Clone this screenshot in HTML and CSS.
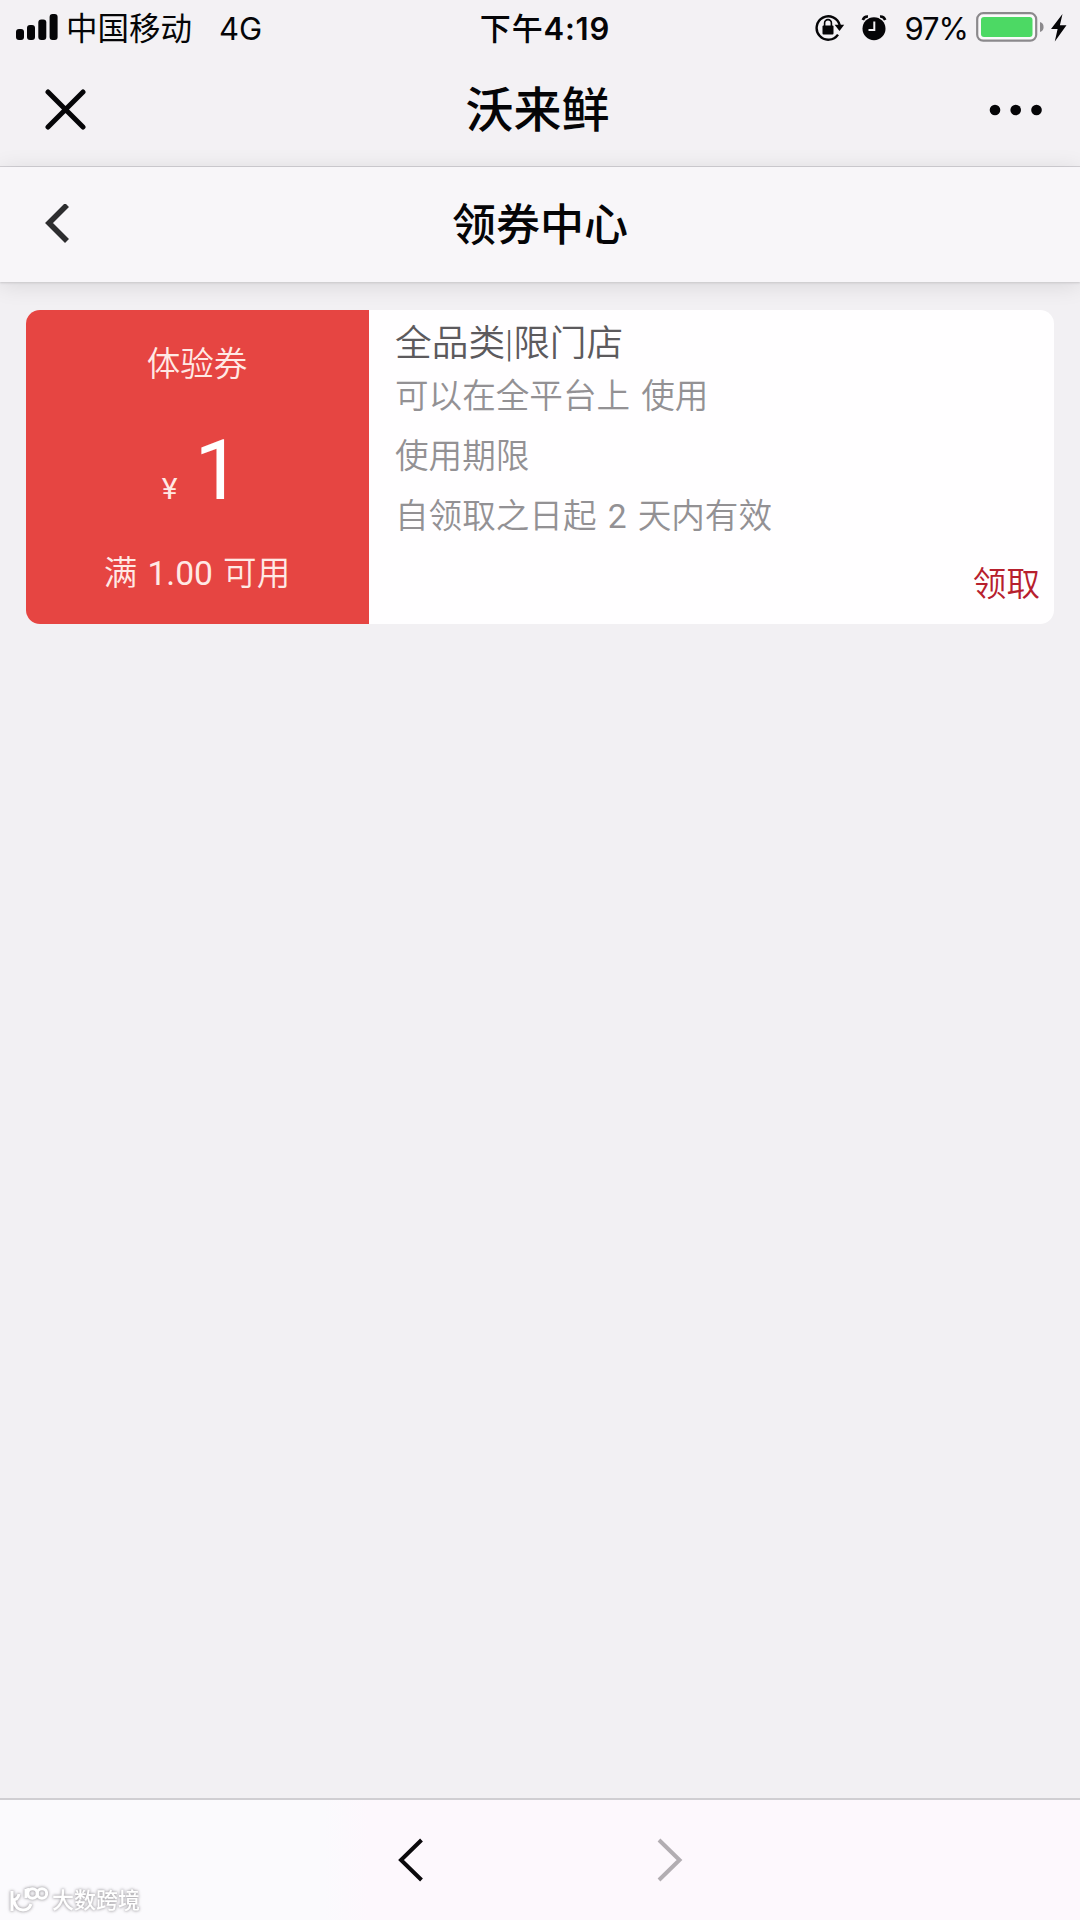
FILE: index.html
```html
<!DOCTYPE html>
<html lang="zh-CN">
<head>
<meta charset="utf-8">
<title>领券中心</title>
<link rel="stylesheet" href="styles.css">
</head>
<body>
<div class="screen">
  <header class="chrome">
    <div class="status">
      <div class="status-side">
        <svg class="signal" width="42" height="27" viewBox="0 0 42 27">
          <rect x="0" y="15" width="8" height="11" rx="3"/>
          <rect x="11" y="11" width="8" height="15" rx="3"/>
          <rect x="22.300" y="5.500" width="8" height="20.500" rx="3"/>
          <rect x="33.600" y="0" width="8" height="26" rx="3"/>
        </svg>
        <span class="carrier">中国移动</span>
        <span class="network">4G</span>
      </div>
      <div class="time"><span>下午</span><span class="clock">4:19</span></div>
      <div class="status-side status-right">
        <svg class="lock" width="30" height="28" viewBox="0 0 30 28">
          <path d="M23 20.600A11.700 11.700 0 1 1 24.700 11.200" fill="none" stroke="#050507" stroke-width="2.400"/>
          <path d="M19.600 10.800H29.200L24.500 17Z"/>
          <rect x="7.500" y="11.500" width="11" height="9" rx="1"/>
          <path d="M9.600 12.500V9a3.400 3.400 0 0 1 6.800 0v3" fill="none" stroke="#050507" stroke-width="1.600"/>
        </svg>
        <svg class="alarm" width="26" height="26" viewBox="0 0 26 26">
          <circle cx="13" cy="13.700" r="11.500"/>
          <path d="M1.800 5Q3 1.300 7 1.500M24.200 5Q23 1.300 19 1.500" fill="none" stroke="#050507" stroke-width="2.600"/>
          <path d="M13.300 6.500V15H7.500" fill="none" stroke="#f3f1f4" stroke-width="2"/>
        </svg>
        <span class="percent">97%</span>
        <svg class="battery" width="68" height="32" viewBox="0 0 68 32">
          <rect x="1.200" y="1.200" width="59" height="27.500" rx="6" fill="#fbfafb" stroke="#8b898c" stroke-width="2.200"/>
          <rect x="5" y="5" width="51.500" height="20" rx="3" fill="#4cd964"/>
          <path d="M64 10q3.600 1 3.600 5t-3.600 5z" fill="#8b898c"/>
        </svg>
        <svg class="bolt" width="16" height="28" viewBox="0 0 16 28">
          <path d="M11.500 0L0 15H6.600L3.800 27.500L15.500 11.300H8.900Z"/>
        </svg>
      </div>
    </div>
    <div class="bar app-bar">
      <svg class="close" width="42" height="42" viewBox="0 0 42 42"><path d="M3 3L38 38M38 3L3 38"/></svg>
      <h1 class="app-title">沃来鲜</h1>
      <svg class="more" width="54" height="12" viewBox="0 0 54 12"><circle cx="6" cy="6" r="5.300"/><circle cx="26.700" cy="6" r="5.300"/><circle cx="47.500" cy="6" r="5.300"/></svg>
    </div>
  </header>
  <nav class="bar page-bar">
    <svg class="back" width="26" height="42" viewBox="0 0 26 42"><path d="M22 1L4 19L22 37"/></svg>
    <h2 class="page-title">领券中心</h2>
    <span></span>
  </nav>
  <main class="content">
    <article class="coupon">
      <div class="value">
        <p class="kind">体验券</p>
        <p class="amount"><span class="yen">¥</span><span class="number">1</span></p>
        <p class="rule">满 <span class="digits">1.00</span> 可用</p>
      </div>
      <div class="detail">
        <h3 class="scope">全品类|限门店</h3>
        <p class="line">可以在全平台上 使用</p>
        <p class="line">使用期限</p>
        <p class="line">自领取之日起 <span class="digits">2</span> 天内有效</p>
        <span class="claim">领取</span>
      </div>
    </article>
  </main>
  <footer class="toolbar">
    <svg width="26" height="46" viewBox="0 0 26 46"><path d="M23.500 3L3 23L23.500 43" stroke="#0b090c"/></svg>
    <svg width="26" height="46" viewBox="0 0 26 46"><path d="M2 3L22.500 23L2 43" stroke="#b2adb2"/></svg>
    <div class="watermark">
      <svg width="40" height="30" viewBox="0 0 40 30">
        <path d="M4 5V25M4 14Q10 14 11 8M6 15Q8 24 15 24Q21 24 23 18M18 12V3M18 7Q18 3 21 3.500"/>
        <circle cx="24.500" cy="7.500" r="4.700"/><circle cx="34" cy="7.500" r="4.700"/>
      </svg>
      <span class="watermark-text">大数跨境</span>
    </div>
  </footer>
</div>
</body>
</html>
```
FILE: styles.css
```css
* { box-sizing: border-box; }
body, h1, h2, h3, p { margin: 0; }
body {
  font-family: Roboto, "Noto Sans CJK SC", sans-serif;
  color: #050507;
}
svg { display: block; flex: none; fill: #050507; }
.screen {
  display: flex;
  flex-direction: column;
  width: 1080px;
  height: 1920px;
  background: #f2f0f3;
  overflow: hidden;
}
.chrome {
  height: 167px;
  background: #f3f1f4;
  border-bottom: 1px solid #d3d1d5;
}
.status {
  display: grid;
  grid-template-columns: 1fr auto 1fr;
  align-items: center;
  height: 53px;
  padding: 0 13px 0 16px;
  font-family: Inter, "Noto Sans CJK SC", sans-serif;
  font-size: 31px;
  line-height: 53px;
  white-space: nowrap;
}
.status-side { display: flex; align-items: center; }
.status-right { justify-content: flex-end; }
.signal { margin-right: 8px; }
.carrier { width: 126px; font-size: 31.500px; }
.network { margin-left: 27px; }
.carrier, .network, .time, .percent { padding-top: 2px; }
.time { display: flex; gap: 0; padding-left: 7px; font-weight: 500; letter-spacing: 0.800px; }
.clock { font-weight: 600; }
.lock { margin-right: 16px; }
.alarm { margin-right: 17px; }
.percent { letter-spacing: -1px; }
.battery { margin: 0 7px 0 8px; }
.bar {
  display: grid;
  grid-template-columns: 1fr auto 1fr;
  align-items: center;
}
.app-bar { height: 113px; padding: 0 50px 0 45px; }
.close { fill: none; stroke: #050507; stroke-width: 5; stroke-linecap: round; }
.more { justify-self: end; margin-right: -13px; }
.app-title { padding-top: 3px; font-size: 48px; font-weight: 500; line-height: 64px; }
.page-bar {
  height: 115px;
  flex: none;
  padding: 0 45px;
  background: #f8f6f9;
  box-shadow: 0 1px 2px #c9c7cb, 0 3px 22px rgba(0, 0, 0, 0.110);
}
.back { fill: none; stroke: #2d2d2f; stroke-width: 5.600; }
.page-title { padding-top: 3px; font-size: 44px; font-weight: 500; line-height: 60px; }
.content { flex: 1; padding: 28px 26px; }
.coupon {
  display: flex;
  height: 314px;
  border-radius: 14px;
  background: #fffeff;
  overflow: hidden;
}
.value {
  display: flex;
  flex-direction: column;
  align-items: center;
  width: 343px;
  padding-top: 30px;
  padding-right: 1px;
  background: #e64542;
  color: #ffe9e5;
  font-size: 33.600px;
  font-weight: 350;
  line-height: 50px;
}
.amount {
  display: flex;
  align-items: baseline;
  gap: 17px;
  height: 110px;
  margin-top: 31px;
  padding-left: 9px;
  line-height: 100px;
}
.yen { font-size: 30px; font-weight: 400; }
.number { font-size: 83px; font-weight: 400; color: #fff; }
.rule { margin-top: 18px; word-spacing: 2px; }
.digits { font-weight: 400; }
.detail {
  display: flex;
  flex-direction: column;
  flex: 1;
  padding: 10px 14px 9px 26px;
  color: #939194;
  font-size: 33.600px;
  font-weight: 350;
  word-spacing: 3px;
}
.scope { color: #5c5a5d; font-size: 36.700px; font-weight: 350; line-height: 47px; }
.line { line-height: 60px; }
.claim { margin-top: auto; align-self: flex-end; color: #b7202d; font-weight: 350; line-height: 60px; }
.toolbar {
  position: relative;
  display: flex;
  justify-content: center;
  gap: 233px;
  height: 122px;
  padding-top: 37px;
  border-top: 2px solid #d0ced2;
  background: linear-gradient(90deg, #fbfafd 0, #fbfafd 30%, #fdf8fd 34%);
}
.toolbar > svg { fill: none; stroke-width: 4; }
.watermark {
  position: absolute;
  left: 8px;
  bottom: 3px;
  display: flex;
  align-items: center;
  gap: 4px;
  color: #fff;
  filter: drop-shadow(0 0 1.500px #aaa8ac) drop-shadow(0 0 1px #cbc9cd);
}
.watermark svg { fill: none; stroke: #fff; stroke-width: 3; }
.watermark-text { font-size: 22px; font-weight: 500; line-height: 32px; }
```
